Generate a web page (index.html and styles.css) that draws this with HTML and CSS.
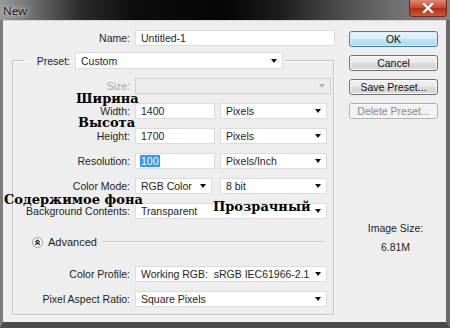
FILE: index.html
```html
<!DOCTYPE html>
<html lang="en">
<head>
  <meta charset="UTF-8">
  <title>New</title>
  <link rel="stylesheet" href="styles.css">
</head>
<body>
<div class="window">
  <div class="titlebar">
    <span class="title">New</span>
    <span class="close">
      <svg width="12" height="10" viewBox="0 0 12 10"><path d="M2 1 L10 9 M10 1 L2 9" stroke="#fff" stroke-width="2.4" stroke-linecap="square"/></svg>
    </span>
  </div>
  <div class="client">
    <div class="form">
      <div class="row name-row">
        <span class="lbl">Name:</span>
        <div class="field w-name">Untitled-1</div>
      </div>
      <fieldset class="group">
        <legend class="preset">
          <span class="lbl-p">Preset:</span>
          <div class="field select w-preset"><span>Custom</span><i class="arrow"></i></div>
        </legend>
        <div class="row first">
          <span class="lbl dis">Size:</span>
          <div class="field select disabled w-size"><span></span><i class="arrow"></i></div>
        </div>
        <div class="row">
          <span class="lbl">Width:</span>
          <div class="field w-num">1400</div>
          <div class="field select w-unit"><span>Pixels</span><i class="arrow"></i></div>
        </div>
        <div class="row">
          <span class="lbl">Height:</span>
          <div class="field w-num">1700</div>
          <div class="field select w-unit"><span>Pixels</span><i class="arrow"></i></div>
        </div>
        <div class="row">
          <span class="lbl">Resolution:</span>
          <div class="field w-num"><span class="sel">100</span></div>
          <div class="field select w-unit"><span>Pixels/Inch</span><i class="arrow"></i></div>
        </div>
        <div class="row">
          <span class="lbl">Color Mode:</span>
          <div class="field select w-mode"><span>RGB Color</span><i class="arrow"></i></div>
          <div class="field select w-unit"><span>8 bit</span><i class="arrow"></i></div>
        </div>
        <div class="row">
          <span class="lbl">Background Contents:</span>
          <div class="field select w-wide"><span>Transparent</span><i class="arrow"></i></div>
        </div>
        <div class="advanced">
          <span class="adv-icon">
            <svg width="11" height="11" viewBox="0 0 11 11">
              <circle cx="5.5" cy="5.5" r="5" fill="#fafafa" stroke="#9a9a9a"/>
              <path d="M3.3 5.2 L5.5 3.1 L7.7 5.2 M3.3 7.8 L5.5 5.7 L7.7 7.8" fill="none" stroke="#222" stroke-width="1.2"/>
            </svg>
          </span>
          <span class="adv-text">Advanced</span>
          <span class="adv-line"></span>
        </div>
        <div class="row profile">
          <span class="lbl">Color Profile:</span>
          <div class="field select w-wide"><span>Working RGB:&nbsp; sRGB IEC61966-2.1</span><i class="arrow"></i></div>
        </div>
        <div class="row">
          <span class="lbl">Pixel Aspect Ratio:</span>
          <div class="field select w-wide"><span>Square Pixels</span><i class="arrow"></i></div>
        </div>
      </fieldset>
    </div>
    <div class="side">
      <button class="btn ok">OK</button>
      <button class="btn">Cancel</button>
      <button class="btn">Save Preset...</button>
      <button class="btn off">Delete Preset...</button>
      <div class="imgsize">
        <div>Image Size:</div>
        <div class="mb">6.81M</div>
      </div>
    </div>
  </div>
  <div class="note n-width">Ширина</div>
  <div class="note n-height">Высота</div>
  <div class="note n-bg">Содержимое фона</div>
  <div class="note n-transp">Прозрачный</div>
</div>
</body>
</html>
```

FILE: styles.css
```css
*{
  margin: 0;
  padding: 0;
  box-sizing: border-box;
}
body{
  width: 450px;
  height: 328px;
  overflow: hidden;
  font-family: "Liberation Sans", Arial, sans-serif;
  font-size: 10.5px;
  color: #1e1e1e;
}
.window{
  position: relative;
  width: 450px;
  height: 328px;
  background: #5c5c5c;
  border-left: 3px solid #7c7c7c;
  border-right: 4px solid #6a6a6a;
  border-bottom: 6px solid #4a4a4a;
}
.titlebar{
  display: flex;
  justify-content: space-between;
  height: 20px;
  margin-left: -3px;
  margin-right: -4px;
  background: linear-gradient(90deg, #9a9a9a 0%, #6a6a6a 8%, #2a2a2a 18%, #0c0c0c 30%, #050505 50%, #1c1c1c 62%, #4a4a4a 75%, #707070 88%, #858585 100%);
}
.title{
  padding: 3px 0 0 3px;
  font-family: "Noto Sans", sans-serif;
  font-size: 11.5px;
  color: #1c1c1c;
  text-shadow: 0 0 6px #cfcfcf, 0 0 3px #d8d8d8;
}
.close{
  display: flex;
  align-items: center;
  justify-content: center;
  width: 38px;
  height: 17px;
  margin-right: 3px;
  border: 1px solid #6e2a20;
  border-top: none;
  border-radius: 0 0 4px 4px;
  background: linear-gradient(#e08a78, #c9452c 48%, #b32d12 52%, #d0583a);
}
.client{
  display: flex;
  height: 302px;
  padding-top: 9px;
  background: #eeeeee;
  border-top: 1px solid #d6d6d6;
}
.form{
  width: 337px;
}
.row{
  display: flex;
  align-items: center;
  gap: 5px;
  height: 16px;
  margin-top: 9px;
}
.name-row{
  margin-top: 0;
}
.lbl{
  width: 117px;
  text-align: right;
  white-space: nowrap;
}
.name-row .lbl{
  width: 127px;
}
.lbl.dis{
  color: #a8a8a8;
}
.field{
  display: flex;
  align-items: center;
  justify-content: space-between;
  height: 16px;
  padding: 0 5px 0 5px;
  background: #ffffff;
  border: 1px solid #dcdcdc;
  white-space: nowrap;
}
.arrow{
  width: 0;
  height: 0;
  border-left: 3.5px solid transparent;
  border-right: 3.5px solid transparent;
  border-top: 4px solid #111;
}
.disabled{
  background: #ececec;
  border-color: #d2d2d2;
}
.disabled .arrow{
  border-top-color: #b4b4b4;
}
.sel{
  background: #3399ff;
  color: #fff;
  padding: 0 1px;
  margin-left: -1px;
}
.w-name{ width: 200px; }
.w-preset{ width: 208px; height: 17px; }
.w-size{ width: 196px; }
.w-num{ width: 80px; }
.w-unit{ width: 107px; margin-left: 0; }
.w-mode{ width: 77px; margin-right: 3px; }
.w-wide{ width: 192px; }
.group{
  width: 322px;
  margin: 6px 0 0 9px;
  padding: 0 0 7px 0;
  border: 1px solid #c4c4c4;
  box-shadow: inset 1px 1px 0 #fafafa, 1px 1px 0 #fafafa;
}
.preset{
  display: flex;
  align-items: center;
  gap: 5px;
  margin-left: 11px;
  padding-right: 2px;
}
.lbl-p{
  width: 46px;
  text-align: right;
}
.row.first{
  margin-top: 9px;
}
.advanced{
  display: flex;
  align-items: center;
  height: 16px;
  margin-top: 15px;
  padding-left: 19px;
}
.adv-icon{
  display: flex;
  width: 11px;
  height: 11px;
}
.adv-text{
  margin-left: 5px;
  font-size: 11px;
}
.adv-line{
  width: 223px;
  height: 2px;
  margin-left: 5px;
  border-top: 1px solid #c8c8c8;
  border-bottom: 1px solid #fafafa;
}
.row.profile{
  margin-top: 16px;
}
.side{
  display: flex;
  flex-direction: column;
  width: 89px;
  margin-left: 9px;
  padding-top: 1px;
}
.btn{
  height: 16px;
  margin-bottom: 8px;
  font-family: "Liberation Sans", Arial, sans-serif;
  font-size: 10.5px;
  color: #111;
  border: 1px solid #707070;
  border-radius: 3px;
  background: linear-gradient(#f4f4f4 0%, #e8e8e8 50%, #dadada 52%, #d6d6d6 100%);
  box-shadow: inset 0 0 0 1px #fbfbfb;
}
.btn.ok{
  border-color: #3c7fb1;
  background: linear-gradient(#ebf6fd 0%, #d6ecf9 50%, #bfe2f6 52%, #b2daf2 100%);
  box-shadow: inset 0 0 0 1px #dff2fc;
}
.btn.off{
  color: #8a8a8a;
  border-color: #adb2b5;
  background: #f2f2f2;
}
.imgsize{
  margin-top: 95px;
  padding-left: 4px;
  text-align: center;
  line-height: 13px;
}
.imgsize .mb{
  margin-top: 6px;
}
.note{
  position: absolute;
  font-family: "DejaVu Serif", "Liberation Serif", serif;
  font-weight: bold;
  font-size: 13px;
  line-height: 14px;
  color: #000;
  white-space: nowrap;
}
.n-width{ left: 73px; top: 92px; }
.n-height{ left: 75px; top: 116px; }
.n-bg{ left: 1px; top: 193px; }
.n-transp{ left: 210px; top: 200px; }
```
